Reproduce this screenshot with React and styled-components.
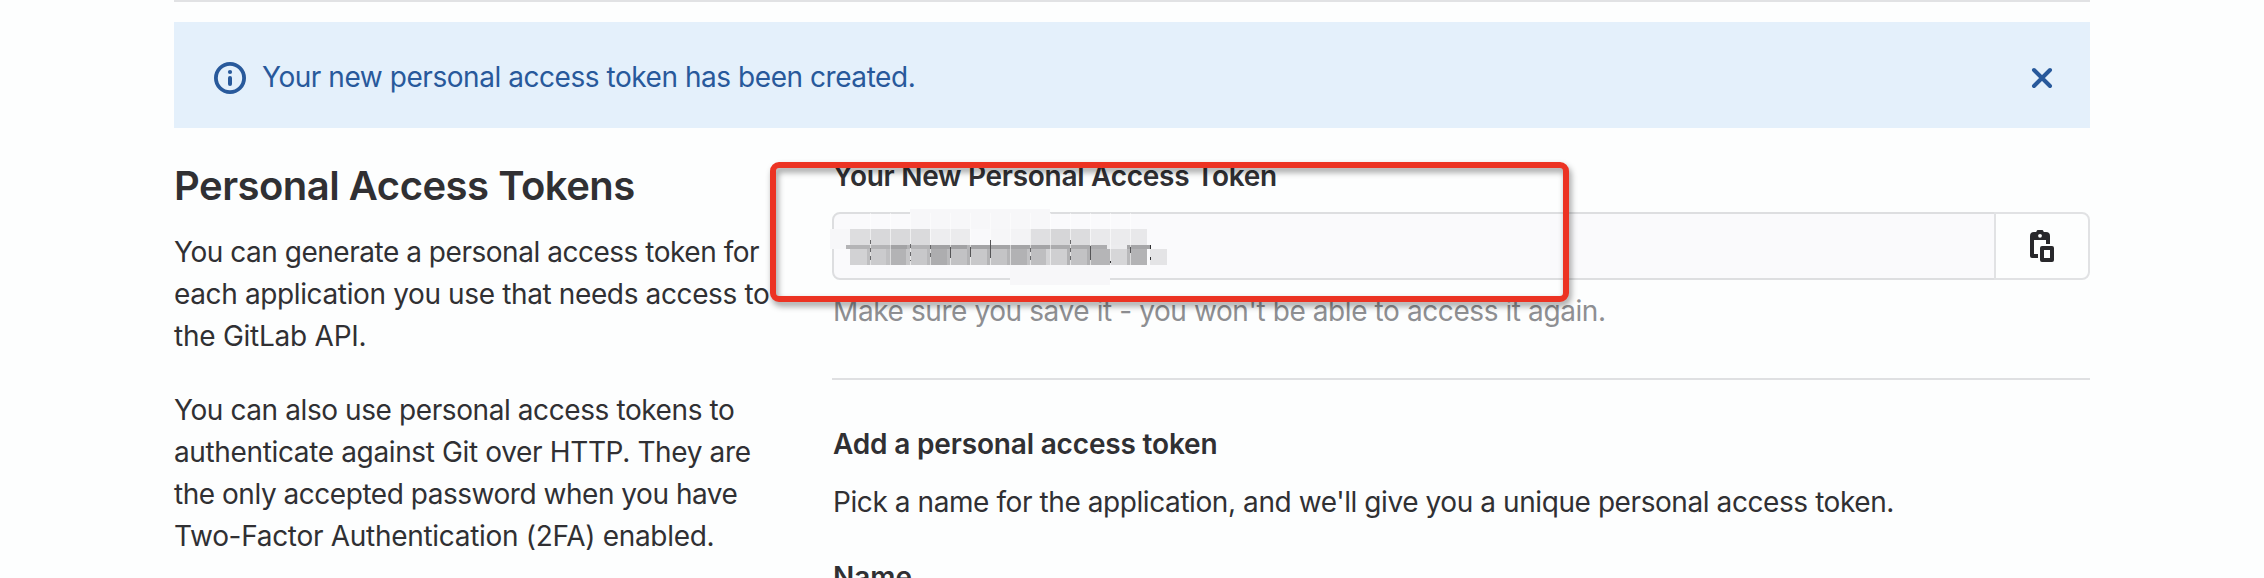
import React from "react";
import styled, { createGlobalStyle } from "styled-components";

const GlobalStyle = createGlobalStyle`
  * { box-sizing: border-box; }
  body {
    margin: 0;
    background: #fdfefe;
    color: #303033;
    font: 400 28px/42px Inter, "Liberation Sans", sans-serif;
    overflow: hidden;
  }
`;

const Page = styled.main`
  height: 578px;
  overflow: hidden;
  padding: 0 174px;
`;

const Line = styled.span`
  display: block;
  width: max-content;
  white-space: nowrap;
  letter-spacing: ${(p) => p.$track || 0}px;
`;

const TopRule = styled.div`
  height: 2px;
  margin-bottom: 20px;
  background: #e1e2e4;
`;

const Alert = styled.section`
  display: flex;
  align-items: center;
  height: 106px;
  padding: 6px 32px 0 40px;
  background: #e4f0fb;
  color: #28599b;
`;

const AlertText = styled.div`
  flex: 1;
  margin: -3px 0 0 16px;
`;

const CloseButton = styled.button`
  display: flex;
  padding: 0;
  border: 0;
  background: none;
  color: inherit;
`;

const Columns = styled.div`
  display: grid;
  grid-template-columns: 594px 1fr;
  column-gap: 64px;
  margin-top: 32px;
`;

const Title = styled.h1`
  margin: 0 0 20px;
  padding-top: 1px;
  font-size: 40px;
  font-weight: 600;
  line-height: 50px;
`;

const Paragraph = styled.p`
  margin: 0 0 32px;
`;

const Content = styled.div`
  position: relative;
`;

const Label = styled.h2`
  margin: 0;
  padding-left: 1px;
  font-size: 28px;
  font-weight: 600;
  line-height: 36px;
`;

const TokenLabel = styled(Label)`
  line-height: 33px;
  padding-bottom: 3px;
`;

const TokenRow = styled.div`
  position: relative;
  display: flex;
  height: 68px;
  margin-top: 16px;
`;

const TokenField = styled.div`
  flex: 1;
  border: 2px solid #dddee0;
  border-radius: 8px 0 0 8px;
  background: #fafafc;
`;

const CopyButton = styled.button`
  display: flex;
  align-items: center;
  justify-content: center;
  width: 96px;
  margin-left: -2px;
  padding: 0 4px 0 0;
  border: 2px solid #e1e2e4;
  border-radius: 0 8px 8px 0;
  background: #fdfefe;
  color: #28282b;
`;

const Help = styled.p`
  margin: 10px 0 0;
  padding-left: 1px;
  color: #8e8f92;
`;

const Rule = styled.div`
  height: 2px;
  margin: 46px 0 0;
  background: #dfe0e2;
`;

const Highlight = styled.div`
  position: absolute;
  z-index: 2;
  top: 2px;
  left: -62px;
  width: 799px;
  height: 140px;
  border: 6px solid #ec3323;
  border-radius: 9px;
  filter: drop-shadow(2px 4px 3px rgba(0, 0, 0, 0.4));
`;

const Redaction = styled.svg`
  position: absolute;
  z-index: 1;
  top: -4px;
  left: -2px;
`;

const InfoIcon = () => (
  <svg width="32" height="32" viewBox="0 0 32 32" fill="currentColor">
    <circle cx="16" cy="16" r="14.1" fill="none" stroke="currentColor" strokeWidth="3.8" />
    <circle cx="16" cy="10" r="2.1" />
    <rect x="14" y="14" width="4" height="10" rx="2" />
  </svg>
);

const CloseIcon = () => (
  <svg width="32" height="32" viewBox="0 0 32 32" fill="none" stroke="currentColor" strokeWidth="4" strokeLinecap="round">
    <path d="M8 8l16 16M24 8L8 24" />
  </svg>
);

const CopyIcon = () => (
  <svg width="32" height="32" viewBox="0 0 16 16" fill="currentColor">
    <path fillRule="evenodd" d="M6.1 1a2 2 0 0 1 3.8 0H11a2 2 0 0 1 2 2v4h-2V5H5v7h2v2H4a1 1 0 0 1-1-1V3a2 2 0 0 1 2-2Z" />
    <circle cx="8" cy="2.9" r="0.95" fill="#fdfefe" />
    <path fillRule="evenodd" d="M9 8h5a1 1 0 0 1 1 1v6a1 1 0 0 1-1 1H9a1 1 0 0 1-1-1V9a1 1 0 0 1 1-1Zm1 2v4h3v-4Z" />
  </svg>
);

const upperTiles = ["#dddddf", "#d8d8da", "#d9d9db", "#dadadc", "#ededef", "#ebebed", "#f9f9fb", "#f6f6f8", "#f3f3f5", "#dfdfe1", "#d6d6d8", "#dcdcde", "#e9e9eb", "#ebebed", "#e8e8ea"];
const lowerTiles = ["#d2d2d4", "#cbcbcd", "#b3b3b5", "#c8c8ca", "#adadaf", "#c2c2c4", "#c8c8ca", "#c4c4c6", "#b2b2b4", "#bebec0", "#cfcfd1", "#c2c2c4", "#b5b5b7", "#d6d6d8", "#b3b3b5"];
const stripes = [[37, 4, "#bebec0"], [56, 4, "#c0c0c2"], [76, 4, "#c6c6c8"], [97, 3, "#b9b9bb"], [117, 3, "#bababc"], [137, 3, "#b3b3b5"], [157, 3, "#b3b3b5"], [177, 3, "#b5b5b7"], [197, 3, "#c2c2c4"], [216, 4, "#d3d3d5"], [237, 3, "#b2b2b4"], [257, 3, "#b0b0b2"], [297, 3, "#b9b9bb"]];
const seams = [40, 60, 80, 100, 120, 140, 160, 180, 200, 220, 240, 260, 280, 300];

const TokenRedaction = () => (
  <Redaction width="340" height="78" shapeRendering="crispEdges">
    <rect x="80" y="1" width="140" height="20" fill="#f7f7f9" />
    <rect x="180" y="57" width="100" height="20" fill="#f7f7f9" />
    <rect x="0" y="21" width="20" height="20" fill="#f7f7f9" />
    {upperTiles.map((color, i) => (
      <rect key={`u${i}`} x={20 + i * 20} y="21" width={i === 14 ? 17 : 20} height="17" fill={color} />
    ))}
    {lowerTiles.map((color, i) => (
      <rect key={`l${i}`} x={20 + i * 20} y="37" width={i === 14 ? 17 : 20} height="20" fill={color} />
    ))}
    {stripes.map(([x, width, color]) => (
      <rect key={x} x={x} y="41" width={width} height="16" fill={color} />
    ))}
    <rect x="16" y="37" width="124" height="4" fill="#b4b4b6" />
    <rect x="60" y="37" width="17" height="4" fill="#a3a3a5" />
    <rect x="100" y="37" width="37" height="4" fill="#a1a1a3" />
    <rect x="140" y="37" width="80" height="4" fill="#a4a4a6" />
    <rect x="220" y="37" width="57" height="4" fill="#acacae" />
    <rect x="277" y="37" width="20" height="4" fill="#ececee" />
    <rect x="297" y="37" width="23" height="4" fill="#a6a6a8" />
    <rect x="320" y="41" width="17" height="16" fill="#e4e4e6" />
    {seams.map((x) => (
      <rect key={x} x={x} y="5" width="1" height="52" fill="#ffffff" opacity="0.55" />
    ))}
    <path d="M120.5 39v11M140.5 39v10M160.5 32v18M260.5 38v14M300.5 39v6" stroke="#555557" />
    <path d="M40.5 32v20M80.5 36v17M100.5 37v16M200.5 40v12M240.5 32v20" stroke="#68686a" strokeDasharray="4 4" />
    <path d="M320.5 37v4M320.5 49v3M280.5 53v2" stroke="#303033" />
  </Redaction>
);

const AddHeading = styled(Label)`
  margin-top: 46px;
`;

const AddText = styled.p`
  margin: 19px 0 0;
  padding-left: 1px;
`;

const NameLabel = styled(Label)`
  margin-top: 36px;
`;

export default function App() {
  return (
    <>
      <GlobalStyle />
      <Page>
        <TopRule />
        <Alert>
          <InfoIcon />
          <AlertText><Line $track={-0.45}>Your new personal access token has been created.</Line></AlertText>
          <CloseButton aria-label="Dismiss"><CloseIcon /></CloseButton>
        </Alert>
        <Columns>
          <div>
            <Title><Line $track={-0.5}>Personal Access Tokens</Line></Title>
            <Paragraph>
              <Line $track={-0.47}>You can generate a personal access token for</Line>
              <Line $track={-0.37}>each application you use that needs access to</Line>
              <Line $track={-0.25}>the GitLab API.</Line>
            </Paragraph>
            <Paragraph>
              <Line $track={-0.41}>You can also use personal access tokens to</Line>
              <Line $track={-0.36}>authenticate against Git over HTTP. They are</Line>
              <Line $track={-0.47}>the only accepted password when you have</Line>
              <Line $track={-0.3}>Two-Factor Authentication (2FA) enabled.</Line>
            </Paragraph>
          </div>
          <Content>
            <TokenLabel><Line $track={-0.28}>Your New Personal Access Token</Line></TokenLabel>
            <TokenRow>
              <TokenField />
              <CopyButton aria-label="Copy token"><CopyIcon /></CopyButton>
              <TokenRedaction />
            </TokenRow>
            <Help><Line $track={-0.41}>Make sure you save it - you won't be able to access it again.</Line></Help>
            <Rule />
            <AddHeading><Line $track={-0.17}>Add a personal access token</Line></AddHeading>
            <AddText><Line $track={-0.42}>Pick a name for the application, and we'll give you a unique personal access token.</Line></AddText>
            <NameLabel><Line>Name</Line></NameLabel>
            <Highlight />
          </Content>
        </Columns>
      </Page>
    </>
  );
}
